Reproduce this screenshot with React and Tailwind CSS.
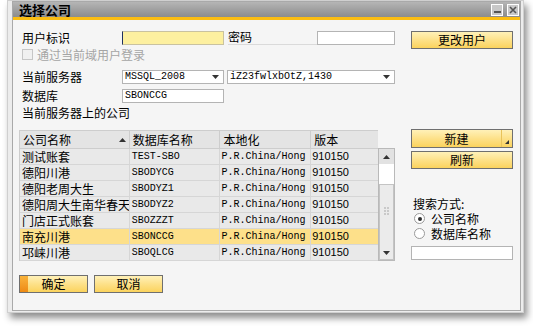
import React from "react";

const cjk = { fontFamily: '"Noto Sans CJK SC", "Noto Sans", sans-serif' };
const mono = { fontFamily: '"Liberation Mono", "DejaVu Sans Mono", monospace' };

const rows = [
    { name: "测试账套", db: "TEST-SBO" },
    { name: "德阳川港", db: "SBODYCG" },
    { name: "德阳老周大生", db: "SBODYZ1" },
    { name: "德阳周大生南华春天", db: "SBODYZ2" },
    { name: "门店正式账套", db: "SBOZZZT" },
    { name: "南充川港", db: "SBONCCG", selected: true },
    { name: "邛崃川港", db: "SBOQLCG" },
];

const Arrow = ({ up }) => (
    <svg width="7" height="4" viewBox="0 0 7 4">
        <path d={up ? "M0 4 L3.5 0 L7 4 Z" : "M0 0 L7 0 L3.5 4 Z"} fill="#333" />
    </svg>
);

const YellowButton = ({ children, className = "", accent }) => (
    <div className={"relative flex items-center justify-center border border-[#6f6f6f] bg-gradient-to-b from-[#fff1b8] via-[#fde189] to-[#fbd35c] text-[12px] text-black " + className} style={cjk}>
        {accent && <div className="absolute left-0 top-0 bottom-0 w-[8px] bg-gradient-to-b from-[#f9b33a] to-[#ee8a12]" />}
        {children}
    </div>
);

const Dropdown = ({ value, className }) => (
    <div className={"flex items-center h-[14px] bg-white border border-[#b4b4b4] pl-[2px] pr-[4px] " + className}>
        <span className="flex-1 text-[10px] leading-none text-black" style={mono}>{value}</span>
        <Arrow />
    </div>
);

export default function App() {
    return (
        <div className="w-[533px] h-[330px] bg-white overflow-hidden" style={cjk}>
            <div className="ml-[7px] w-[517px] h-[313px] border border-[#cfcfcf] bg-[#ececec] pl-[4px] pr-[2px] pb-[1px] shadow-[3px_5px_7px_rgba(0,0,0,0.45)]">
                <div className="h-full border border-[#a9a9a9] flex flex-col">
                    {/* title bar */}
                    <div className="h-[15px] bg-gradient-to-b from-[#b5b5b5] to-[#8c8c8c] flex items-center pl-[6px] pr-[1px]">
                        <span className="flex-1 text-[13px] font-bold leading-none text-black">选择公司</span>
                        <div className="w-[12px] h-[12px] border border-white bg-[#c8c8c8] flex items-end justify-center pb-[2px]">
                            <div className="w-[7px] h-[2px] bg-[#555]" />
                        </div>
                        <div className="w-[12px] h-[12px] ml-[4px] border border-white bg-[#c8c8c8] flex items-center justify-center">
                            <svg width="8" height="8" viewBox="0 0 8 8">
                                <path d="M1 1 L7 7 M7 1 L1 7" stroke="#555" strokeWidth="1.6" />
                            </svg>
                        </div>
                    </div>
                    <div className="h-[3px] bg-[#fbbd12]" />

                    {/* body */}
                    <div className="flex-1 bg-[#f5f5f5] pl-[6px] flex flex-col">
                        <div className="flex">
                            {/* left */}
                            <div className="w-[376px] flex flex-col">
                                <div className="mt-[11px] h-[14px] flex items-center">
                                    <span className="w-[103px] pl-[3px] text-[12px] leading-none">用户标识</span>
                                    <div className="w-[102px] h-[14px] bg-[#fdf0a0] border border-[#c9c2a0] border-l-[#1f2f60]" />
                                    <span className="ml-[4px] w-[89px] h-[14px] text-[12px] leading-none border-b border-[#dadada]">密码</span>
                                    <div className="w-[78px] h-[14px] bg-white border border-[#b4b4b4]" />
                                </div>
                                <div className="mt-[3px] h-[13px] flex items-center pl-[3px]">
                                    <div className="w-[11px] h-[11px] border border-[#c6c6c6] bg-[#f0f0f0]" />
                                    <span className="ml-[4px] text-[12px] leading-none text-[#a5a5a5]">通过当前域用户登录</span>
                                </div>
                                <div className="mt-[9px] h-[14px] flex items-center">
                                    <span className="w-[103px] pl-[3px] text-[12px] leading-none">当前服务器</span>
                                    <Dropdown value="MSSQL_2008" className="w-[102px]" />
                                    <Dropdown value="iZ23fwlxbOtZ,1430" className="ml-[3px] w-[168px]" />
                                </div>
                                <div className="mt-[5px] h-[14px] flex items-center">
                                    <span className="w-[103px] pl-[3px] text-[12px] leading-none">数据库</span>
                                    <div className="w-[102px] h-[14px] bg-white border border-[#b4b4b4] pl-[2px] flex items-center">
                                        <span className="text-[10px] leading-none" style={mono}>SBONCCG</span>
                                    </div>
                                </div>
                                <div className="mt-[3px] h-[14px] pl-[3px] text-[12px] leading-[14px]">当前服务器上的公司</div>

                                {/* table */}
                                <div className="mt-[10px] flex">
                                    <div className="w-[359px] border-l border-t border-[#cdcdcd]">
                                        <div className="flex h-[18px] bg-[#e4e4e4] text-[12px]">
                                            <div className="w-[110px] flex items-center pl-[3px] pr-[3px] border-r border-b border-[#cdcdcd]">
                                                <span className="flex-1">公司名称</span>
                                                <Arrow up />
                                            </div>
                                            <div className="w-[91px] flex items-center pl-[3px] border-r border-b border-[#cdcdcd]">数据库名称</div>
                                            <div className="w-[91px] flex items-center pl-[3px] border-r border-b border-[#cdcdcd]">本地化</div>
                                            <div className="w-[67px] flex items-center pl-[3px] border-b border-[#cdcdcd]">版本</div>
                                        </div>
                                        {rows.map((r) => (
                                            <div key={r.db} className={"flex h-[16px] " + (r.selected ? "bg-[#fde08a]" : "bg-[#e9e9e9]")}>
                                                <div className="w-[110px] flex items-center pl-[2px] border-r border-b border-[#d6d6d6] overflow-hidden whitespace-nowrap text-[12px]">{r.name}</div>
                                                <div className="w-[91px] flex items-center pl-[2px] border-r border-b border-[#d6d6d6] text-[10px]" style={mono}>{r.db}</div>
                                                <div className="w-[91px] flex items-center pl-[1px] border-r border-b border-[#d6d6d6] overflow-hidden whitespace-nowrap text-[10px]" style={mono}>P.R.China/Hong</div>
                                                <div className="w-[67px] flex items-center pl-[1px] border-b border-[#d6d6d6] text-[11px] leading-none" style={{ fontFamily: '"Liberation Sans", sans-serif' }}>910150</div>
                                            </div>
                                        ))}
                                    </div>
                                    {/* scrollbar */}
                                    <div className="mt-[18px] w-[17px] h-[113px] border border-[#b9b9b9] bg-white flex flex-col">
                                        <div className="h-[15px] bg-[#e2e2e2] flex items-center justify-center"><Arrow up /></div>
                                        <div className="mt-[20px] flex-1 border border-[#c4c4c4] bg-[#ebebeb] flex flex-col items-center">
                                            <div className="mt-[22px] grid grid-cols-2 gap-[1px]">
                                                {[0, 1, 2, 3, 4, 5].map((i) => <div key={i} className="w-[2px] h-[2px] bg-[#c9c9c9]" />)}
                                            </div>
                                            <div className="mt-auto mb-[4px]"><Arrow /></div>
                                        </div>
                                    </div>
                                </div>
                            </div>

                            {/* right */}
                            <div className="ml-[16px] w-[102px] flex flex-col">
                                <YellowButton className="mt-[11px] h-[18px]">更改用户</YellowButton>
                                <div className="mt-[80px] h-[19px] flex border border-[#6f6f6f] bg-gradient-to-b from-[#fff1b8] via-[#fde189] to-[#fbd35c]">
                                    <div className="flex-1 flex items-center justify-center text-[12px] border-r border-[#e9c35a]">新建</div>
                                    <div className="w-[10px] flex items-end justify-center pb-[3px]">
                                        <svg width="4" height="4" viewBox="0 0 4 4"><path d="M4 0 L4 4 L0 4 Z" fill="#333" /></svg>
                                    </div>
                                </div>
                                <YellowButton className="mt-[3px] h-[18px]">刷新</YellowButton>
                                <div className="mt-[28px] h-[14px] pl-[2px] text-[12px] leading-[14px]">搜索方式:</div>
                                <div className="h-[15px] flex items-center pl-[3px]">
                                    <div className="w-[11px] h-[11px] rounded-full border border-[#9a9a9a] bg-white flex items-center justify-center">
                                        <div className="w-[4px] h-[4px] rounded-full bg-[#2d2d2d]" />
                                    </div>
                                    <span className="ml-[6px] text-[12px] leading-[13px]">公司名称</span>
                                </div>
                                <div className="h-[15px] flex items-center pl-[3px]">
                                    <div className="w-[11px] h-[11px] rounded-full border border-[#9a9a9a] bg-white" />
                                    <span className="ml-[6px] text-[12px] leading-[13px]">数据库名称</span>
                                </div>
                                <div className="mt-[5px] h-[14px] border border-[#b4b4b4] bg-white" />
                            </div>
                        </div>

                        {/* bottom buttons */}
                        <div className="mt-[14px] flex">
                            <YellowButton accent className="w-[69px] h-[18px]">确定</YellowButton>
                            <YellowButton className="ml-[6px] w-[69px] h-[18px]">取消</YellowButton>
                        </div>
                    </div>
                </div>
            </div>
        </div>
    );
}
